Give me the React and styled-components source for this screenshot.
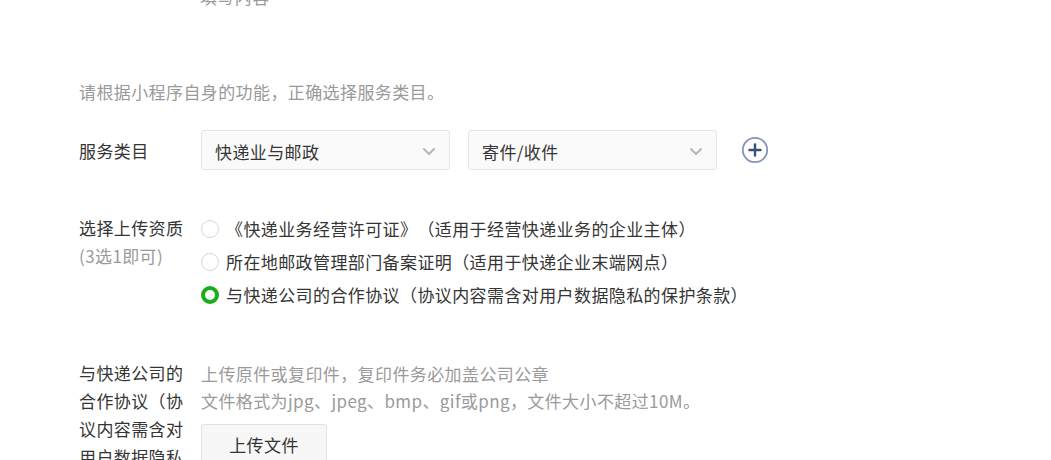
import React from "react";
import styled, { createGlobalStyle } from "styled-components";

const Global = createGlobalStyle`
  html, body { margin: 0; padding: 0; background: #fff; }
  body {
    font-family: "Noto Sans CJK SC", "Noto Sans", "Liberation Sans", sans-serif;
    color: #353535;
    font-size: 17px;
    letter-spacing: 0.4px;
    overflow: hidden;
    text-spacing-trim: space-all;
  }
`;

const Page = styled.div`
  padding-left: 79px;
  width: 1051px;
  height: 460px;
  box-sizing: border-box;
  overflow: hidden;
`;

const TopText = styled.div`
  margin-top: -17px;
  margin-left: 121px;
  line-height: 28px;
  color: #9a9a9a;
`;

const Hint = styled.div`
  margin-top: ${(p) => p.$mt || 0}px;
  line-height: 28px;
  color: #9a9a9a;
`;

const FormRow = styled.div`
  display: flex;
  align-items: ${(p) => p.$align || "flex-start"};
  margin-top: ${(p) => p.$mt || 0}px;
`;

const Label = styled.div`
  width: 108px;
  margin-right: 14px;
  flex-shrink: 0;
  line-height: 28px;
  padding-top: ${(p) => p.$pt || 0}px;
  word-break: break-all;
  color: #353535;
`;

const SubLabel = styled.div`
  color: #9a9a9a;
`;

const Select = styled.div`
  width: 249px;
  height: 40px;
  box-sizing: border-box;
  border: 1px solid #e5e5e5;
  border-radius: 3px;
  background: #fafafa;
  display: flex;
  align-items: center;
  justify-content: space-between;
  padding: 2px 13px 0 13px;
  margin-right: 18px;
  line-height: 1;
`;

const Chevron = () => (
  <svg width="14" height="9" viewBox="0 0 14 9">
    <path d="M2 2 L7 7 L12 2" fill="none" stroke="#b5b5b5" strokeWidth="2" strokeLinecap="round" strokeLinejoin="round" />
  </svg>
);

const AddButton = styled.button`
  margin-left: 6px;
  width: 28px;
  height: 28px;
  border: none;
  background: none;
  padding: 0;
  display: flex;
  align-items: center;
  justify-content: center;
`;

const PlusIcon = () => (
  <svg width="28" height="28" viewBox="0 0 28 28">
    <circle cx="14" cy="14" r="12.2" fill="none" stroke="#8593b8" strokeWidth="1.8" />
    <path d="M14 8.5 V19.5 M8.5 14 H19.5" stroke="#3b4d7a" strokeWidth="2.4" strokeLinecap="round" />
  </svg>
);

const RadioList = styled.div`
  display: flex;
  flex-direction: column;
`;

const RadioRow = styled.label`
  display: flex;
  align-items: center;
  height: 33px;
  line-height: 1;
`;

const RadioCircle = styled.span`
  width: 18px;
  height: 18px;
  box-sizing: border-box;
  border-radius: 50%;
  border: ${(p) => (p.$checked ? "4.5px solid #1aad19" : "1px solid #d6d6d6")};
  background: #fff;
  margin-right: 7px;
  flex-shrink: 0;
`;

const UploadCol = styled.div`
  display: flex;
  flex-direction: column;
  align-items: flex-start;
`;

const UploadHint = styled.div`
  line-height: 27px;
  color: #9a9a9a;
  padding-top: 0.5px;
`;

const UploadButton = styled.button`
  margin-top: 10px;
  width: 126px;
  height: 40px;
  border: 1px solid #e2e2e2;
  border-radius: 3px;
  background: #f7f7f7;
  font-family: inherit;
  font-size: 17px;
  letter-spacing: inherit;
  color: #353535;
  padding: 0;
`;

const options = [
  { text: "《快递业务经营许可证》（适用于经营快递业务的企业主体）", checked: false },
  { text: "所在地邮政管理部门备案证明（适用于快递企业末端网点）", checked: false },
  { text: "与快递公司的合作协议（协议内容需含对用户数据隐私的保护条款）", checked: true },
];

export default function App() {
  return (
    <Page>
      <Global />
      <TopText>填写内容</TopText>
      <Hint $mt={67}>请根据小程序自身的功能，正确选择服务类目。</Hint>
      <FormRow $mt={24} $align="center">
        <Label $pt={2}>服务类目</Label>
        <Select>
          <span>快递业与邮政</span>
          <Chevron />
        </Select>
        <Select>
          <span>寄件/收件</span>
          <Chevron />
        </Select>
        <AddButton aria-label="add">
          <PlusIcon />
        </AddButton>
      </FormRow>
      <FormRow $mt={42}>
        <Label $pt={2}>
          选择上传资质
          <SubLabel>(3选1即可)</SubLabel>
        </Label>
        <RadioList>
          {options.map((o) => (
            <RadioRow key={o.text}>
              <RadioCircle $checked={o.checked} />
              <span>{o.text}</span>
            </RadioRow>
          ))}
        </RadioList>
      </FormRow>
      <FormRow $mt={48}>
        <Label>与快递公司的合作协议（协议内容需含对用户数据隐私的保护条款）</Label>
        <UploadCol>
          <UploadHint>上传原件或复印件，复印件务必加盖公司公章</UploadHint>
          <UploadHint>文件格式为jpg、jpeg、bmp、gif或png，文件大小不超过10M。</UploadHint>
          <UploadButton>上传文件</UploadButton>
        </UploadCol>
      </FormRow>
    </Page>
  );
}
